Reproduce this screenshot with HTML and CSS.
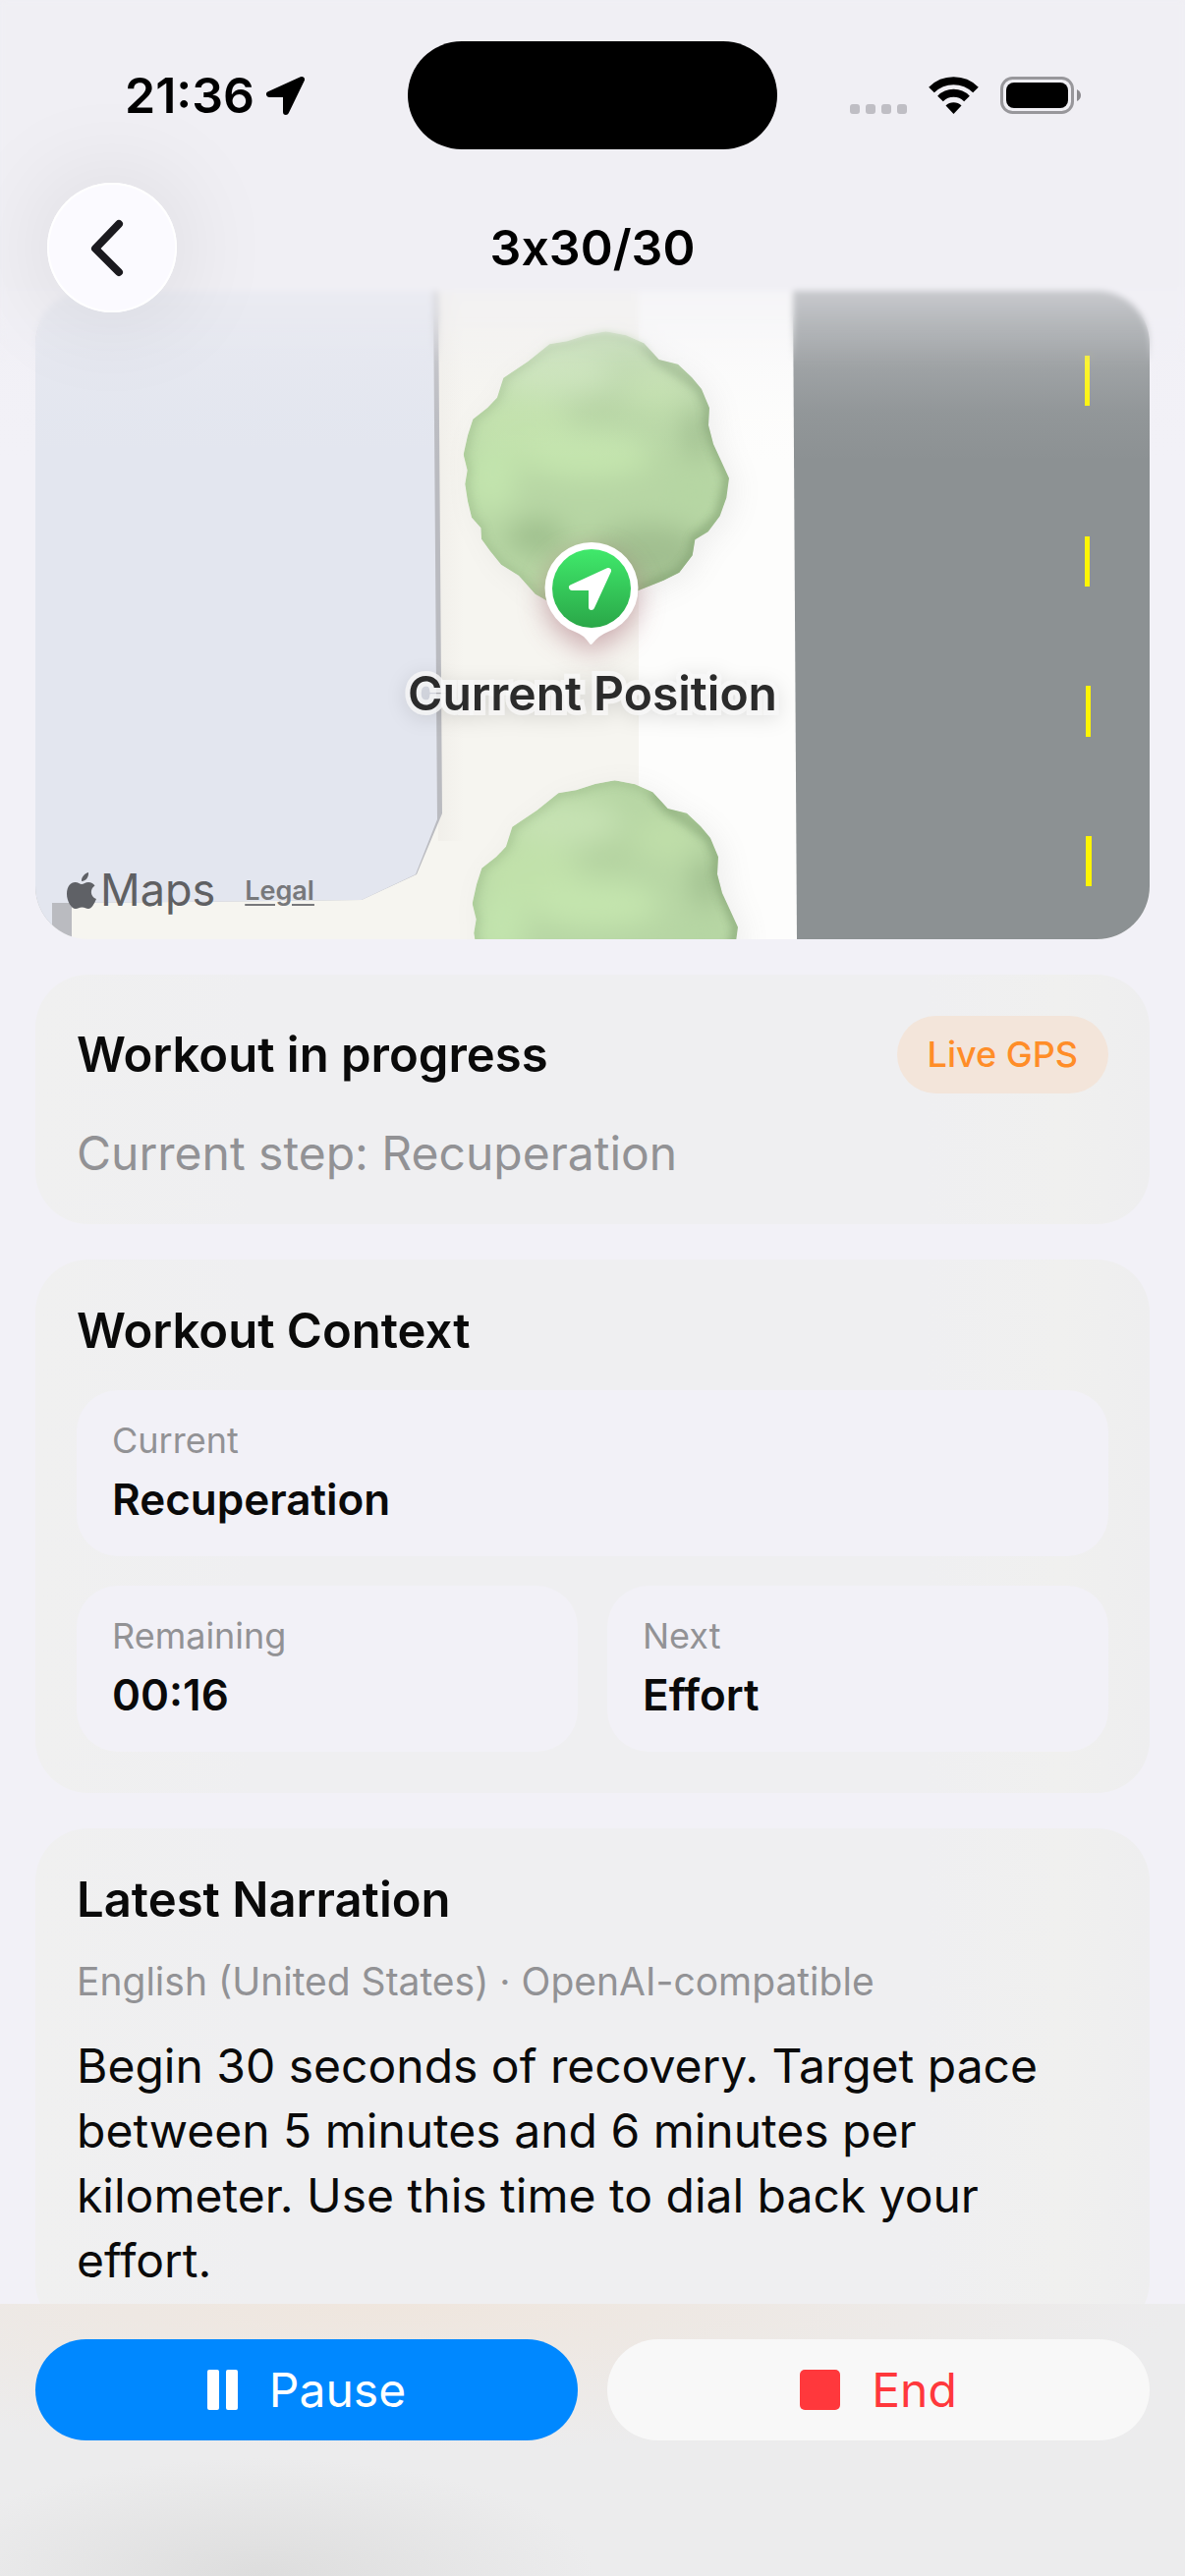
FILE: index.html
```html
<!DOCTYPE html>
<html lang="en">
<head>
    <meta charset="UTF-8">
    <meta name="viewport" content="width=device-width, initial-scale=1.0">
    <title>3x30/30</title>
    <link rel="stylesheet" href="styles.css">
</head>
<body>
    <div class="app">
        <header class="top">
            <div class="status-bar">
                <div class="status-left">
                    <span>21:36</span>
                    <svg class="icon-location" viewBox="0 0 39 39" width="39" height="39" aria-hidden="true">
                        <path d="M36 3 L3 18 H20 V36 Z" fill="#000" stroke="#000" stroke-width="6" stroke-linejoin="round"/>
                    </svg>
                </div>
                <div class="island"></div>
                <div class="status-right">
                    <svg viewBox="0 0 58 38" width="58" height="38" aria-hidden="true" fill="#bfbec4">
                        <rect x="0" y="28" width="10" height="10" rx="3"/>
                        <rect x="16" y="28" width="10" height="10" rx="3"/>
                        <rect x="32" y="28" width="10" height="10" rx="3"/>
                        <rect x="48" y="28" width="10" height="10" rx="3"/>
                    </svg>
                    <svg viewBox="0 0 51 38" width="51" height="38" aria-hidden="true">
                        <g fill="none" stroke="#000" stroke-width="8">
                            <path d="M3 13.500 A32 32 0 0 1 48 13.500"/>
                            <path d="M12 22.500 A19 19 0 0 1 39 22.500"/>
                        </g>
                        <path d="M25.500 38 L17.500 29.500 A11.500 11.500 0 0 1 33.500 29.500 Z"/>
                    </svg>
                    <svg viewBox="0 0 82 38" width="82" height="38" aria-hidden="true">
                        <rect x="1.500" y="1.500" width="72" height="35" rx="11" fill="none" stroke="#98979b" stroke-width="3"/>
                        <rect x="6" y="6" width="63" height="26" rx="8"/>
                        <path d="M78 13 Q82 15 82 19 Q82 23 78 25 Z" fill="#8b8a8e"/>
                    </svg>
                </div>
            </div>
            <nav class="nav-bar">
                <button class="back" type="button" aria-label="Back">
                    <svg viewBox="0 0 132 132" width="132" height="132" aria-hidden="true">
                        <path d="M73 42 L49 67 L73 91" fill="none" stroke="#1b1a1f" stroke-width="8" stroke-linecap="round" stroke-linejoin="round"/>
                    </svg>
                </button>
                <h1>3x30/30</h1>
            </nav>
        </header>

        <main class="content">
            <section class="map" aria-label="Map">
                <svg class="map-canvas" viewBox="36 296 1134 660" preserveAspectRatio="xMidYMid slice" aria-hidden="true">
                    <defs>
                        <linearGradient id="pin" x1="0" y1="0" x2="0" y2="1">
                            <stop offset="0" stop-color="#40e96b"/>
                            <stop offset="1" stop-color="#2aa748"/>
                        </linearGradient>
                        <linearGradient id="edge" x1="0" y1="0" x2="1" y2="0">
                            <stop offset="0" stop-color="#f1efea"/>
                            <stop offset="1" stop-color="#f6f5f0"/>
                        </linearGradient>
                        <filter id="soft" x="-50%" y="-50%" width="200%" height="200%"><feGaussianBlur stdDeviation="42"/></filter>
                        <filter id="shade" x="-50%" y="-50%" width="200%" height="200%"><feGaussianBlur stdDeviation="14"/></filter>
                        <path id="crown" d="M650 172 L712 184 L766 208 L812 258 L870 272 L912 312 L942 348 L966 406 L963 458 L978 516 L1002 568 L1026 620 L1018 680 L998 736 L962 784 L922 808 L914 856 L874 908 L826 932 L748 964 L700 985 L640 1010 L560 1030 L500 1010 L468 994 L434 974 L384 918 L330 884 L296 842 L270 806 L268 772 L240 740 L228 690 L220 638 L227 596 L215 548 L228 490 L244 440 L288 406 L318 374 L337 314 L412 264 L478 211 L532 202 L590 183 Z"/>
                        <clipPath id="crown-clip"><use href="#crown"/></clipPath>
                        <g id="tree" transform="translate(400 280) scale(.33333)">
                            <use href="#crown" fill="#777" opacity=".1" filter="url(#soft)" transform="translate(24 16)"/>
                            <g clip-path="url(#crown-clip)">
                                <use href="#crown" fill="#b7d6a4"/>
                                <g filter="url(#soft)">
                                    <ellipse cx="500" cy="300" rx="170" ry="70" fill="#c6e2b3"/>
                                    <ellipse cx="390" cy="460" rx="150" ry="110" fill="#c1e1aa"/>
                                    <ellipse cx="300" cy="620" rx="80" ry="110" fill="#c2e4ad"/>
                                    <ellipse cx="590" cy="550" rx="200" ry="70" fill="#c4e5ae"/>
                                    <ellipse cx="810" cy="350" rx="100" ry="70" fill="#bfdea9"/>
                                    <ellipse cx="630" cy="400" rx="70" ry="35" fill="#b3d29f"/>
                                    <ellipse cx="910" cy="660" rx="70" ry="60" fill="#b5d6a3"/>
                                    <ellipse cx="440" cy="800" rx="90" ry="50" fill="#9cbd8b"/>
                                    <ellipse cx="780" cy="860" rx="180" ry="100" fill="#a1bf90"/>
                                    <ellipse cx="930" cy="480" rx="40" ry="80" fill="#9ebd8d"/>
                                </g>
                                <use href="#crown" fill="none" stroke="#85a476" stroke-width="20" opacity=".4" filter="url(#shade)"/>
                                <path d="M766 208 L812 258 L942 348 L966 406 L963 458 L1026 620 L998 736 L922 808 L914 856 L874 908 L748 964" fill="none" stroke="#7f9f70" stroke-width="24" opacity=".6" filter="url(#shade)"/>
                            </g>
                        </g>
                    </defs>

                    <!-- ground, pavement and road -->
                    <rect x="36" y="296" width="1134" height="660" fill="#f6f5f0"/>
                    <rect x="446" y="296" width="26" height="560" fill="url(#edge)"/>
                    <rect x="650" y="296" width="165" height="660" fill="#fdfdfc"/>
                    <path d="M807 296 H1170 V956 H811 Z" fill="#8c9193"/>

                    <!-- building -->
                    <path d="M36 296 H446 L450 828 L424 890 L368 916 L73 919 V956 H36 Z" fill="#babbc0"/>
                    <path d="M36 296 H441 L445 834 L423 890 L368 916 L73 919 H53 V956 H36 Z" fill="#e3e6ef"/>

                    <g fill="#fff500">
                        <rect x="1104" y="362" width="5" height="51"/>
                        <rect x="1104" y="546" width="5" height="51"/>
                        <rect x="1105" y="698" width="5" height="52"/>
                        <rect x="1105" y="851" width="6" height="51"/>
                    </g>

                    <use href="#tree"/>
                    <use href="#tree" transform="translate(9 457)"/>

                    <!-- position pin -->
                    <path d="M602 552 a47 47 0 0 1 17 91 q-10 4 -15 12 q-2 3 -4 0 q-6 -9 -15 -12 a47 47 0 0 1 17 -91 Z" fill="#a0606c" opacity=".5" filter="url(#shade)" transform="translate(0 10)"/>
                    <path d="M602 552 a47 47 0 0 1 17 91 q-10 4 -16 12 q-2 2 -3 0 q-6 -9 -15 -12 a47 47 0 0 1 17 -91 Z" fill="#fff"/>
                    <circle cx="602" cy="599" r="40" fill="url(#pin)"/>
                    <path d="M619 581 L582 598 H602 V618 Z" fill="#fff" stroke="#fff" stroke-width="6" stroke-linejoin="round"/>
                </svg>
                <p class="map-label">Current Position</p>
                <div class="map-credit">
                    <span class="maps-logo">
                        <svg viewBox="0 0 30 37" width="30" height="37" aria-hidden="true" fill="#5f6166">
                            <path d="M22 0 C22.500 5 19 9 15 9 C14.500 5 18 1 22 0 Z"/>
                            <path d="M15 12 C17 12 19 10 22 10 C25 10 27 11.500 28.500 13.500 C23 17 24 25 30 27 C28 32 25 37 22 37 C19.500 37 18.500 35.500 15.500 35.500 C12.500 35.500 11.500 37 9 37 C4.500 37 0 29 0 22 C0 14 4 10 8.500 10 C11.500 10 13.500 12 15 12 Z"/>
                        </svg>
                        Maps
                    </span>
                    <a class="legal" href="#legal">Legal</a>
                </div>
            </section>

            <section class="card">
                <div class="card-head">
                    <h2>Workout in progress</h2>
                    <span class="badge">Live GPS</span>
                </div>
                <p class="step">Current step: Recuperation</p>
            </section>

            <section class="card">
                <h2>Workout Context</h2>
                <dl class="tiles">
                    <div class="tile wide">
                        <dt>Current</dt>
                        <dd>Recuperation</dd>
                    </div>
                    <div class="tile">
                        <dt>Remaining</dt>
                        <dd>00:16</dd>
                    </div>
                    <div class="tile">
                        <dt>Next</dt>
                        <dd>Effort</dd>
                    </div>
                </dl>
            </section>

            <section class="card">
                <h2>Latest Narration</h2>
                <p class="meta">English (United States) · OpenAI-compatible</p>
                <p class="narration">Begin 30 seconds of recovery. Target pace between 5 minutes and 6 minutes per kilometer. Use this time to dial back your effort.</p>
            </section>
        </main>

        <footer class="actions">
            <button class="btn pause" type="button">
                <svg viewBox="0 0 31 41" width="31" height="41" aria-hidden="true" fill="currentColor">
                    <rect x="0" y="0" width="12" height="41" rx="2"/>
                    <rect x="19" y="0" width="12" height="41" rx="2"/>
                </svg>
                Pause
            </button>
            <button class="btn end" type="button">
                <svg viewBox="0 0 41 41" width="41" height="41" aria-hidden="true" fill="currentColor">
                    <rect width="41" height="41" rx="5"/>
                </svg>
                End
            </button>
        </footer>
    </div>
</body>
</html>
```
FILE: styles.css
```css
:root {
    --bg: #f2f1f7;
    --bar: #f0eff4;
    --card: #efeff1;
    --text: #0a0a0a;
    --muted: #929295;
    --blue: #0088ff;
    --red: #ff383c;
    --orange: #ff8d28;
}

* {
    margin: 0;
    padding: 0;
    box-sizing: border-box;
}

body {
    font-family: Inter, "Noto Sans", sans-serif;
    font-size: 48px;
    color: var(--text);
    background: var(--bg);
}

button {
    font: inherit;
    border: 0;
    cursor: pointer;
}

svg {
    display: block;
    flex-shrink: 0;
}

.app {
    position: relative;
    height: 100vh;
    display: flex;
    flex-direction: column;
    overflow: hidden;
}

/* header floats over the scrolling content and fades it out */
.top {
    position: absolute;
    inset: 0 0 auto;
    z-index: 2;
    height: 480px;
    padding-top: 42px;
    background: linear-gradient(var(--bar) 290px, rgba(240, 239, 244, 0.6) 296px, rgba(240, 239, 244, 0.38) 335px, rgba(240, 239, 244, 0.18) 375px, rgba(240, 239, 244, 0.06) 420px, rgba(240, 239, 244, 0) 470px);
    pointer-events: none;
}

.top::before {
    content: "";
    position: absolute;
    inset: 0;
    z-index: -1;
    backdrop-filter: blur(3px);
    mask-image: linear-gradient(#000 320px, transparent 370px);
}

.status-bar {
    display: grid;
    grid-template-columns: 1fr 376px 1fr;
    align-items: center;
}

.status-left,
.status-right {
    display: flex;
    align-items: center;
}

.status-left {
    gap: 12px;
    padding-left: 127px;
    color: #000;
    font-size: 50px;
    font-weight: 600;
}

.status-right {
    justify-content: flex-end;
    gap: 22px;
    padding-right: 106px;
}

.island {
    height: 110px;
    border-radius: 55px;
    background: #000;
}

.nav-bar {
    display: grid;
    grid-template-columns: 132px 1fr 132px;
    align-items: center;
    padding: 34px 48px 0;
}

/* keep the plain "x" between digits */
.nav-bar h1 {
    font-size: 50px;
    font-weight: 600;
    font-variant-ligatures: no-contextual;
    text-align: center;
    color: #000;
}

.back {
    width: 132px;
    height: 132px;
    border-radius: 50%;
    background: #fbfaff;
    box-shadow: inset 0 0 0 2px #fff, 0 0 110px rgba(0, 0, 0, 0.11);
    pointer-events: auto;
}

.content {
    flex: 1;
    min-height: 0;
    display: flex;
    flex-direction: column;
    gap: 36px;
    padding: 296px 36px 0;
    overflow-y: auto;
    scrollbar-width: none;
}

.content > * {
    flex-shrink: 0;
}

.map {
    position: relative;
    border-radius: 54px;
    overflow: hidden;
}

.map-canvas {
    width: 100%;
    height: auto;
}

.map-label {
    position: absolute;
    top: 380px;
    left: 0;
    right: 0;
    text-align: center;
    font-size: 48px;
    line-height: 60px;
    font-weight: 600;
    color: #2b2b2b;
    -webkit-text-stroke: 10px rgba(248, 248, 247, 0.8);
    paint-order: stroke fill;
    filter: drop-shadow(0 4px 10px rgba(0, 0, 0, 0.12));
}

.map-credit {
    position: absolute;
    left: 32px;
    bottom: 22px;
    display: flex;
    align-items: center;
    gap: 30px;
    color: #5f6063;
}

.maps-logo {
    display: flex;
    align-items: center;
    gap: 4px;
    font-size: 45px;
    line-height: 56px;
}

.legal {
    font-size: 27px;
    font-weight: 600;
    color: #77787b;
    text-underline-offset: 4px;
}

.card {
    padding: 42px;
    border-radius: 54px;
    background: linear-gradient(90deg, #f0f0f0, var(--card) 20%, var(--card) 80%, #f0f0ef 92%, #eeeeef);
    display: flex;
    flex-direction: column;
    gap: 30px;
}

.card-head {
    display: flex;
    align-items: center;
    justify-content: space-between;
}

h2 {
    font-size: 49px;
    line-height: 61px;
    font-weight: 600;
}

.badge {
    padding: 0 31px;
    border-radius: 40px;
    background: #f3e5da;
    color: var(--orange);
    font-size: 36px;
    line-height: 79px;
    font-weight: 500;
}

.step {
    line-height: 61px;
    color: var(--muted);
}

.tiles {
    display: grid;
    grid-template-columns: 1fr 1fr;
    gap: 30px;
}

.tile {
    display: flex;
    flex-direction: column;
    gap: 12px;
    padding: 30px 36px;
    border-radius: 42px;
    background: var(--bg);
}

.tile.wide {
    grid-column: span 2;
}

.tile dt {
    font-size: 36px;
    line-height: 42px;
    color: var(--muted);
}

.tile dd {
    font-size: 44px;
    line-height: 55px;
    font-weight: 600;
}

.meta {
    font-size: 39px;
    line-height: 46px;
    color: var(--muted);
}

.narration {
    line-height: 66px;
}

.actions {
    display: grid;
    grid-template-columns: 1fr 1fr;
    gap: 30px;
    padding: 36px 36px 138px;
    background:
        radial-gradient(ellipse 340px 120px at 22% 100%, #dddddd, rgba(221, 221, 221, 0)),
        radial-gradient(ellipse 800px 150px at 33% 0, #efe6de, rgba(239, 230, 222, 0)),
        #ececed;
}

.btn {
    display: flex;
    align-items: center;
    justify-content: center;
    gap: 32px;
    height: 103px;
    border-radius: 52px;
}

.pause {
    background: var(--blue);
    color: #fff;
}

.end {
    background: #f8f8f8;
    color: var(--red);
}
```
